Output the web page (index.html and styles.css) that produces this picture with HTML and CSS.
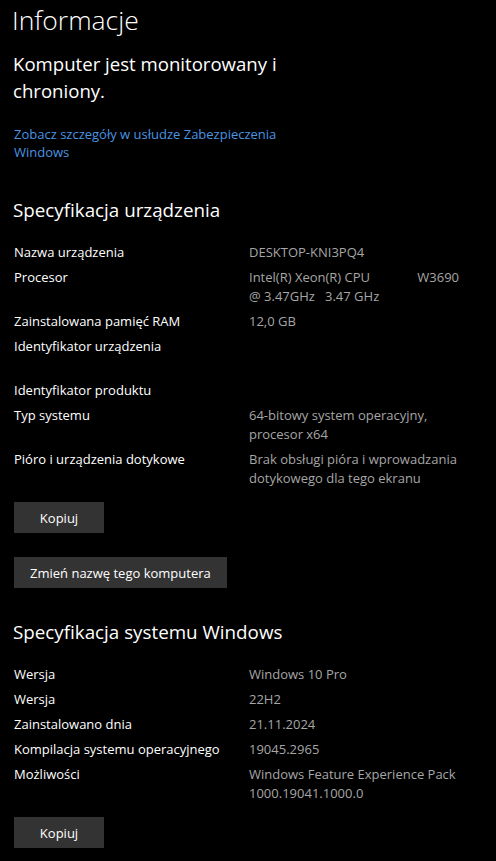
FILE: index.html
```html
<!DOCTYPE html>
<html lang="pl">
<head>
    <meta charset="UTF-8">
    <meta name="viewport" content="width=device-width, initial-scale=1.0">
    <title>Informacje</title>
    <link rel="stylesheet" href="styles.css">
</head>
<body>
    <div class="page">
        <h1 class="title">Informacje</h1>

        <p class="status">Komputer jest monitorowany i chroniony.</p>
        <a class="link" href="#">Zobacz szczegóły w usłudze Zabezpieczenia Windows</a>

        <h2 class="section">Specyfikacja urządzenia</h2>
        <div class="specs">
            <div class="row"><span class="label">Nazwa urządzenia</span><span class="value">DESKTOP-KNI3PQ4</span></div>
            <div class="row"><span class="label">Procesor</span><span class="value">Intel(R) Xeon(R) CPU&nbsp;&nbsp;&nbsp;&nbsp;&nbsp;&nbsp;&nbsp;&nbsp;&nbsp;&nbsp;&nbsp;&nbsp;&nbsp;&nbsp;W3690 @ 3.47GHz&nbsp;&nbsp;&nbsp;3.47 GHz</span></div>
            <div class="row"><span class="label">Zainstalowana pamięć RAM</span><span class="value">12,0 GB</span></div>
            <div class="row"><span class="label">Identyfikator urządzenia</span><span class="value empty"></span></div>
            <div class="row"><span class="label">Identyfikator produktu</span><span class="value"></span></div>
            <div class="row"><span class="label">Typ systemu</span><span class="value">64-bitowy system operacyjny, procesor x64</span></div>
            <div class="row"><span class="label">Pióro i urządzenia dotykowe</span><span class="value">Brak obsługi pióra i wprowadzania dotykowego dla tego ekranu</span></div>
        </div>
        <div class="actions">
            <button class="btn btn-small">Kopiuj</button>
            <button class="btn">Zmień nazwę tego komputera</button>
        </div>

        <h2 class="section">Specyfikacja systemu Windows</h2>
        <div class="specs">
            <div class="row"><span class="label">Wersja</span><span class="value">Windows 10 Pro</span></div>
            <div class="row"><span class="label">Wersja</span><span class="value">22H2</span></div>
            <div class="row"><span class="label">Zainstalowano dnia</span><span class="value">21.11.2024</span></div>
            <div class="row"><span class="label">Kompilacja systemu operacyjnego</span><span class="value">19045.2965</span></div>
            <div class="row"><span class="label">Możliwości</span><span class="value">Windows Feature Experience Pack 1000.19041.1000.0</span></div>
        </div>
        <div class="actions">
            <button class="btn btn-small">Kopiuj</button>
        </div>
    </div>
</body>
</html>
```

FILE: styles.css
```css
body {
    margin: 0;
    background-color: #000;
    color: #fff;
    font-family: "Open Sans", Arial, sans-serif;
}

.page {
    padding: 0 14px;
    display: flex;
    flex-direction: column;
    align-items: flex-start;
}

.title {
    margin: 2px 0 0 -2px;
    font-size: 26.5px;
    font-weight: 300;
    line-height: 36px;
}

.status {
    margin: 12px 0 0 -1px;
    width: 290px;
    font-size: 18.6px;
    line-height: 27px;
}

.link {
    margin-top: 21px;
    width: 290px;
    color: #4a94e0;
    font-size: 13px;
    line-height: 18px;
    text-decoration: none;
}

.section {
    margin: 36px 0 0 -1px;
    font-size: 18.8px;
    font-weight: 400;
    line-height: 27px;
}

.actions + .section {
    margin-top: 31px;
}

.specs {
    margin-top: 19px;
    display: flex;
    flex-direction: column;
    row-gap: 6px;
    font-size: 13px;
    line-height: 19px;
}

.row {
    display: flex;
}

.label {
    width: 235px;
    flex-shrink: 0;
}

.value {
    width: 216px;
    color: #a6a6a6;
}

.value.empty {
    min-height: 38px;
}

.actions {
    margin-top: 14px;
    display: flex;
    flex-direction: column;
    align-items: flex-start;
    row-gap: 24px;
}

.btn {
    height: 31px;
    padding: 0 16px;
    background-color: #333;
    border: none;
    color: #fff;
    font-family: inherit;
    font-size: 13px;
}

.btn-small {
    width: 90px;
}
```
